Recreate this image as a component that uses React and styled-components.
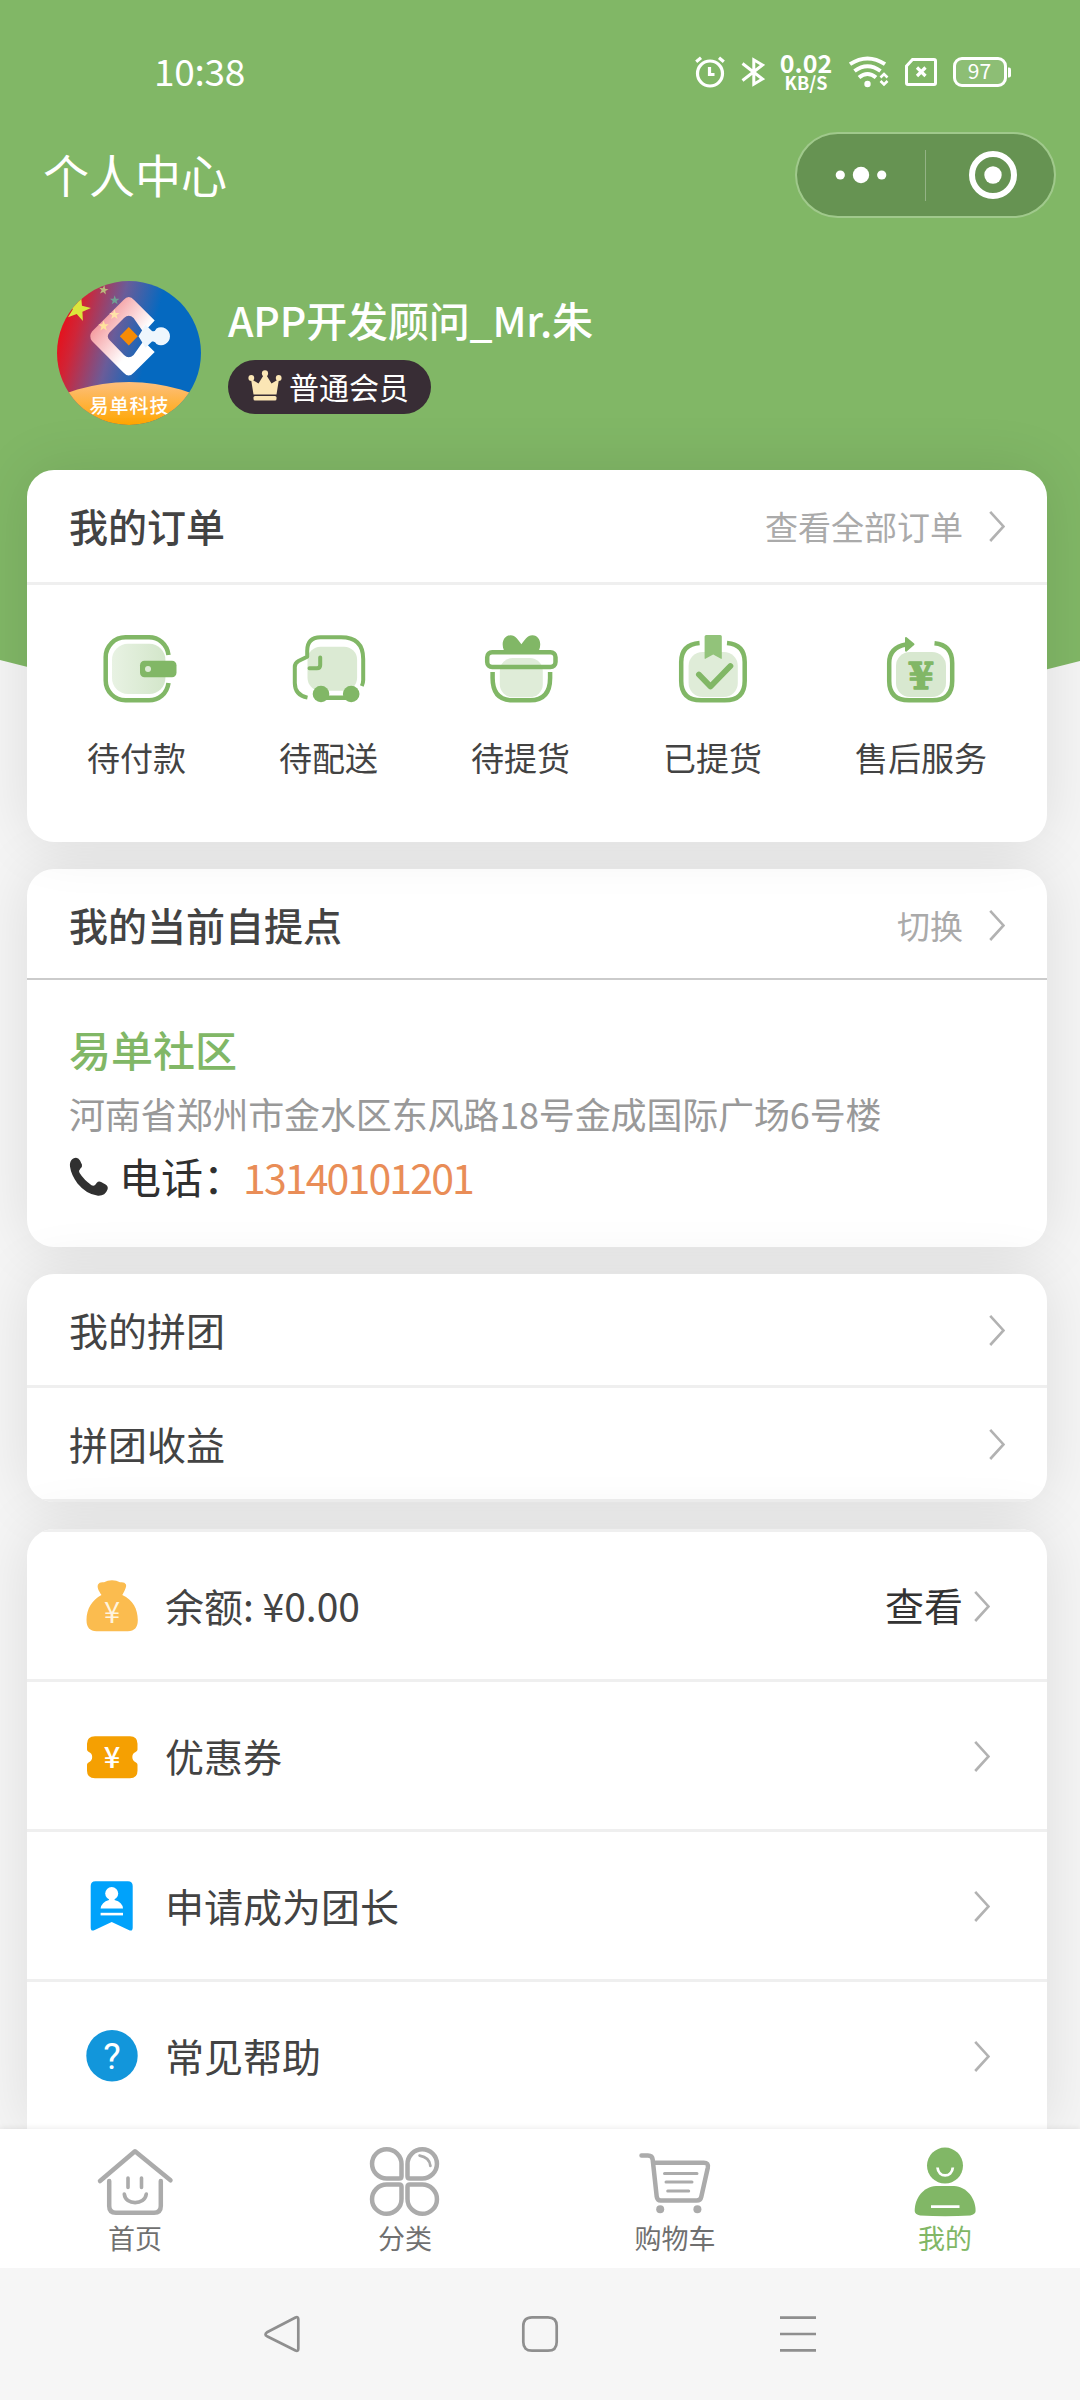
import styled, { createGlobalStyle } from "styled-components";

const GREEN = "#81b766";

const GlobalStyle = createGlobalStyle`
  * {
    box-sizing: border-box;
  }

  body {
    margin: 0;
    background: #f5f5f5;
    font-family: "Noto Sans CJK SC", sans-serif;
    color: #434343;
  }

  svg {
    display: block;
    flex-shrink: 0;
  }
`;

const Screen = styled.div`
  position: relative;
  display: flex;
  flex-direction: column;
  width: 1080px;
  height: 2400px;
  overflow: hidden;
  background: #f5f5f5;
`;

const Backdrop = styled.svg`
  position: absolute;
  top: 0;
  left: 0;
`;

const StatusBar = styled.div`
  position: relative;
  display: flex;
  align-items: center;
  justify-content: space-between;
  height: 120px;
  padding: 24px 69px 0 154px;
  color: #fff;
`;

const Clock = styled.span`
  padding-bottom: 5px;
  font-size: 37px;
  line-height: 44px;
  letter-spacing: -0.3px;
`;

const StatusIcons = styled.div`
  display: flex;
  align-items: center;
  gap: 16px;
`;

const NetSpeed = styled.div`
  display: flex;
  flex-direction: column;
  align-items: center;
  width: 54px;
  margin-left: -2px;
  font-weight: 700;
  font-size: 25px;
  line-height: 20px;
`;

const NetUnit = styled.span`
  font-size: 18px;
  font-weight: 700;
  line-height: 21px;
`;

const TitleBar = styled.header`
  position: relative;
  display: flex;
  align-items: center;
  justify-content: space-between;
  height: 110px;
  padding: 0 24px 0 43px;
`;

const PageTitle = styled.h1`
  margin: 0;
  padding-bottom: 4px;
  font-size: 46px;
  font-weight: 400;
  line-height: 60px;
  color: #fff;
`;

const Capsule = styled.div`
  display: flex;
  align-items: center;
  width: 261px;
  height: 86px;
  border: 2px solid rgba(255, 255, 255, 0.25);
  border-radius: 43px;
  background: #669352;
  background-clip: padding-box;
`;

const CapsuleButton = styled.div`
  display: flex;
  justify-content: center;
  width: 128px;
  padding-left: ${(props) => props.$shift || 0}px;
`;

const CapsuleDivider = styled.div`
  width: 1px;
  height: 51px;
  background: rgba(255, 255, 255, 0.3);
`;

const Profile = styled.section`
  position: relative;
  display: flex;
  align-items: center;
  gap: 27px;
  padding: 51px 57px 45px;
`;

const ProfileInfo = styled.div`
  display: flex;
  flex-direction: column;
  align-items: flex-start;
  gap: 16px;
  padding-top: 2px;
`;

const UserName = styled.div`
  font-size: 41px;
  font-weight: 500;
  line-height: 50px;
  letter-spacing: -0.15px;
  color: #fff;
`;

const MemberBadge = styled.div`
  display: flex;
  align-items: center;
  gap: 7px;
  height: 54px;
  padding: 0 22px 0 20px;
  border-radius: 27px;
  background: #382d35;
  color: #fff;
  font-size: 30px;
  line-height: 40px;
`;

const BadgeText = styled.span`
  padding-bottom: 3px;
`;

const Cards = styled.main`
  position: relative;
  display: flex;
  flex: 1;
  flex-direction: column;
  gap: 27px;
  padding: 0 33px 0 27px;
`;

const Card = styled.section`
  position: relative;
  z-index: ${(props) => props.$layer || 0};
  height: ${(props) => props.$height}px;
  border-radius: ${(props) => (props.$open ? "27px 27px 0 0" : "27px")};
  background: #fff;
  box-shadow: 0 0 60px rgba(0, 0, 0, 0.1);
  overflow: hidden;
`;

const CardHead = styled.div`
  display: flex;
  align-items: center;
  justify-content: space-between;
  height: ${(props) => (props.$thin ? 111 : 115)}px;
  padding: ${(props) => (props.$thin ? "3px 42px 0" : "0 42px")};
  border-bottom: ${(props) =>
    props.$thin ? "2px solid #cbcbcb" : "3px solid #efefef"};
`;

const CardTitle = styled.h2`
  margin: 0;
  padding-bottom: 3px;
  font-size: 39px;
  font-weight: 500;
  line-height: 50px;
`;

const MoreLink = styled.div`
  display: flex;
  align-items: center;
  gap: 26px;
  font-size: 33px;
  line-height: 44px;
  color: #aaa;
`;

const OrderTabs = styled.div`
  display: flex;
  justify-content: space-between;
  padding: 44px 60px 0;
`;

const OrderTab = styled.div`
  display: flex;
  flex-direction: column;
  align-items: center;
  gap: 25px;
  font-size: 33px;
  line-height: 46px;
`;

const PickupBody = styled.div`
  display: flex;
  flex-direction: column;
  padding: 43px 42px 0;
`;

const PickupName = styled.div`
  font-size: 42px;
  font-weight: 500;
  line-height: 52px;
  color: ${GREEN};
`;

const PickupAddress = styled.div`
  margin-top: 14px;
  font-size: 36px;
  line-height: 48px;
  letter-spacing: -0.15px;
  white-space: nowrap;
  color: #999;
`;

const PhoneRow = styled.div`
  display: flex;
  align-items: center;
  margin-top: 12px;
  font-size: 42px;
  line-height: 54px;
  color: #303030;
`;

const PhoneLabel = styled.span`
  width: 124px;
  margin-left: 10px;
  white-space: nowrap;
`;

const PhoneNumber = styled.span`
  font-size: 41px;
  letter-spacing: -1.85px;
  color: #e98d57;
`;

const GroupRow = styled.div`
  display: flex;
  align-items: center;
  justify-content: space-between;
  height: 114px;
  padding: 0 42px;
  border-bottom: 3px solid #efefef;
  font-size: 39px;
  line-height: 50px;
`;

const GroupLabel = styled.span`
  padding-bottom: 2px;
`;

const MenuRow = styled.div`
  display: flex;
  align-items: center;
  gap: 25px;
  height: 150px;
  padding: 0 57px;
  border-top: 3px solid #efefef;
  font-size: 39px;
  line-height: 50px;
`;

const MenuLabel = styled.span`
  flex: 1;
  padding-bottom: 2px;
`;

const MenuAction = styled.div`
  display: flex;
  align-items: center;
  gap: 11px;
  color: #333;
`;

const ActionText = styled.span`
  padding-bottom: 3px;
`;

const TabBar = styled.nav`
  position: relative;
  display: flex;
  height: 139px;
  background: #fff;
  box-shadow: 0 -1px 6px rgba(0, 0, 0, 0.08);
`;

const Tab = styled.div`
  display: flex;
  flex: 1;
  flex-direction: column;
  align-items: center;
  padding-top: 12px;
  font-size: 27px;
  line-height: 34px;
  color: ${(props) => (props.$active ? GREEN : "#707070")};
`;

const SystemBar = styled.div`
  position: relative;
  display: flex;
  align-items: center;
  justify-content: center;
  gap: 218px;
  height: 132px;
  background: #f6f6f6;
`;

const AlarmIcon = () => (
  <svg width="30" height="32" viewBox="0 0 30 32" fill="none" stroke="#fff" strokeWidth="3.2">
    <circle cx="15" cy="17.5" r="12.5" />
    <path d="M14.5 11v7.5h5" />
    <path d="M1.2 5.8 6 1.8M28.8 5.8 24 1.8" />
  </svg>
);

const BluetoothIcon = () => (
  <svg width="24" height="32" viewBox="0 0 24 32" fill="none" stroke="#fff" strokeWidth="3">
    <path d="M1.5 7.5 21.5 23l-8.7 5.2V3.8L21.5 9 1.5 24.5" />
  </svg>
);

const WifiIcon = () => (
  <svg width="40" height="32" viewBox="0 0 40 32" fill="none" stroke="#fff" strokeWidth="4">
    <path d="M1 8.2q17.500-11.500 35 0" />
    <path d="M5.500 15q13-9.500 26 0" />
    <path d="M10 21.500q8.500-7 17 0" />
    <circle cx="18.5" cy="28" r="3.2" fill="#fff" stroke="none" />
    <path d="m31.5 21.500 3.500-3.500 3.500 3.500M31.500 25l3.500 3.500 3.500-3.500" strokeWidth="2.6" />
  </svg>
);

const SimIcon = () => (
  <svg width="32" height="30" viewBox="0 0 32 30" fill="none" stroke="#fff">
    <path d="M7.5 2.5H29q1.5 0 1.5 1.5v22q0 1.5-1.5 1.5H3q-1.5 0-1.5-1.5V9z" strokeWidth="3" />
    <path d="m12 10.5 8.500 8.500M20.500 10.500 12 19" strokeWidth="3.2" />
  </svg>
);

const BatteryIcon = () => (
  <svg width="58" height="32" viewBox="0 0 58 32">
    <rect x="1.5" y="2.5" width="51" height="27" rx="7.5" fill="rgba(255,255,255,.1)" stroke="#fff" strokeWidth="3" />
    <path d="M55 11.5h1q2 0 2 2v6q0 2-2 2h-1z" fill="#fff" />
    <text x="26.5" y="23" fontSize="21" textAnchor="middle" fill="#fff">
      97
    </text>
  </svg>
);

const DotsIcon = () => (
  <svg width="52" height="18" viewBox="0 0 52 18" fill="#fff">
    <circle cx="5.3" cy="9" r="4.6" />
    <circle cx="26" cy="9" r="8.2" />
    <circle cx="46.7" cy="9" r="4.6" />
  </svg>
);

const TargetIcon = () => (
  <svg width="48" height="48" viewBox="0 0 48 48">
    <circle cx="24" cy="24" r="21" fill="none" stroke="#fff" strokeWidth="6" />
    <circle cx="24" cy="24" r="8.7" fill="#fff" />
  </svg>
);

const STAR = "M0-10 2.4-3.1H9.5L3.8 1.2 5.9 8.1 0 4 -5.9 8.1 -3.8 1.2 -9.5-3.1H-2.4z";

const Avatar = () => (
  <svg width="144" height="144" viewBox="0 0 144 144">
    <defs>
      <clipPath id="avatarClip">
        <circle cx="72" cy="72" r="72" />
      </clipPath>
      <linearGradient id="avatarSky" gradientUnits="userSpaceOnUse" x1="2" y1="60" x2="92" y2="84">
        <stop offset="0" stopColor="#e3141f" />
        <stop offset="0.15" stopColor="#cf2538" />
        <stop offset="0.55" stopColor="#6a5c99" />
        <stop offset="0.95" stopColor="#0569c0" />
      </linearGradient>
      <linearGradient id="avatarMark" x1="0.1" y1="0.2" x2="0.75" y2="0.8">
        <stop offset="0" stopColor="#f38c90" />
        <stop offset="0.8" stopColor="#fff" />
      </linearGradient>
      <linearGradient id="avatarSun" gradientUnits="userSpaceOnUse" x1="0" y1="101" x2="0" y2="144">
        <stop offset="0" stopColor="#fdbf7c" />
        <stop offset="1" stopColor="#ffa600" />
      </linearGradient>
    </defs>
    <g clipPath="url(#avatarClip)">
      <rect width="144" height="144" fill="url(#avatarSky)" />
      <path
        d="M66.5 19q5.3-6 10.6 0l20.6 20.5-11.1 12-10-14.500q-4.800-4.500-9.600 0L52.500 51.500q-3.500 3.800 0 7.600L67 74q4.800 4.500 9.600 0L86.500 60l11.200 11L77 91.500q-5.300 6-10.600 0L35 60q-3.500-4.700 0-9.500z"
        fill="url(#avatarMark)"
      />
      <path d="m71.8 46 9 9.300-9 9.300-9-9.300z" fill="#f68b05" />
      <path
        d="m81.5 55.300 7-11.500 6.500 6.200q3 1 4.500-2.500a9 9 0 1 1 0 15.600q-1.500-3.500-4.500-2.500l-6.500 6.200z"
        fill="#eef6fd"
      />
      <g transform="translate(21 28) rotate(14) scale(1.3)" fill="#dbe63c">
        <path d={STAR} />
      </g>
      <g transform="translate(46.6 9) rotate(10) scale(.5)" fill="#b9b97d">
        <path d={STAR} />
      </g>
      <g transform="translate(57.7 19.3) scale(.5)" fill="#6fa193">
        <path d={STAR} />
      </g>
      <g transform="translate(57.4 33.6) scale(.55)" fill="#ffe3a8">
        <path d={STAR} />
      </g>
      <g transform="translate(46.6 45) scale(.55)" fill="#ffe39c">
        <path d={STAR} />
      </g>
      <ellipse cx="72" cy="200" rx="135" ry="99" fill="url(#avatarSun)" />
      <text x="72.5" y="132" fontSize="19" fontWeight="500" letterSpacing="1" textAnchor="middle" fill="#fff">
        易单科技
      </text>
    </g>
  </svg>
);

const CrownIcon = () => (
  <svg width="34" height="34" viewBox="0 0 34 34" fill="#fbe6b5">
    <path d="M3 9 10.5 13.500 16 4.500h2l5.500 9L31 9 28.500 24.500h-23z" />
    <circle cx="3.3" cy="8" r="2.9" />
    <circle cx="17" cy="3.4" r="3.1" />
    <circle cx="30.7" cy="8" r="2.9" />
    <rect x="5.5" y="26" width="23" height="4.6" rx="1.5" />
  </svg>
);

const Chevron = () => (
  <svg width="16" height="32" viewBox="0 0 16 32" fill="none" stroke="#b2b2b2" strokeWidth="2.6">
    <path d="M1.2 1.8 14.5 16.5 1.2 31" />
  </svg>
);

const OrderIcon = ({ children }) => (
  <svg
    width="80"
    height="80"
    viewBox="0 0 80 80"
    fill="none"
    stroke={GREEN}
    strokeWidth="4.5"
    strokeLinecap="round"
    strokeLinejoin="round"
  >
    {children}
  </svg>
);

const WalletIcon = () => (
  <OrderIcon>
    <defs>
      <linearGradient id="walletFill">
        <stop offset="0" stopColor="#e8f2e3" />
        <stop offset="1" stopColor="#d3e6ca" />
      </linearGradient>
    </defs>
    <rect x="15" y="14.7" width="53.4" height="50.3" rx="16" fill="url(#walletFill)" stroke="none" />
    <path
      d="M71.5 26C70 15 61.500 8.300 52 8.300H28.500A19.800 19.800 0 0 0 8.700 28v23.500A19.800 19.800 0 0 0 28.500 71.300h23.500C61.500 71.300 70 65 71.500 54"
      strokeLinecap="butt"
    />
    <rect x="43" y="31.7" width="36.5" height="16.6" rx="4.5" fill={GREEN} stroke="none" />
    <circle cx="51" cy="40" r="3" fill="#dcebd5" stroke="none" />
  </OrderIcon>
);

const TruckIcon = () => (
  <OrderIcon>
    <rect x="18.5" y="17.7" width="49.6" height="44" rx="13" fill="#dbead3" stroke="none" />
    <path
      d="M18.5 68.600C10.500 67 5.800 62 5.800 54V38q0-4 3.700-6l8.700-4.300V22Q18.200 8.300 31.500 8.300H52Q74.200 8.300 74.200 30v21q0 3-1.400 6"
      strokeWidth="4"
      strokeLinecap="butt"
    />
    <path d="M31.2 28.5V36q0 3.300-3.300 3.300H20.500" strokeWidth="4" />
    <path d="M32 68.7h30" />
    <circle cx="32" cy="65" r="8.3" fill={GREEN} stroke="none" />
    <circle cx="62.2" cy="65" r="8.3" fill={GREEN} stroke="none" />
  </OrderIcon>
);

const GiftIcon = () => (
  <OrderIcon>
    <rect x="18.8" y="29" width="43" height="39.3" rx="13" fill="#dfecd8" stroke="none" />
    <path
      d="M23 21.500C20 15 22 6.500 29.500 6.200c5 0 8 5 10.900 9.100 3-4.100 6-9.100 11-9.100 7.500.3 9.500 8.800 6.500 15.300z"
      fill={GREEN}
      stroke="none"
    />
    <rect x="6.2" y="23.2" width="68.3" height="14.8" rx="5" />
    <path d="M11.6 43v6q0 22.300 20 22.300h17.500q20 0 20-22.300v-6" strokeLinecap="butt" />
  </OrderIcon>
);

const PickedIcon = () => (
  <OrderIcon>
    <rect x="15.6" y="23" width="49.2" height="45" rx="14" fill="#dfecd8" stroke="none" />
    <path
      d="M26.6 14Q8.200 15.500 8.200 33v19q0 19.300 20 19.300h23.500q20 0 20-19.300V33Q71.700 15.500 54 14"
      strokeLinecap="butt"
    />
    <path
      d="M33.3 6h14q1.500 0 1.500 1.500V29q0 1.500-1.300.6L40.200 25.500 32.800 29.600q-1.200.9-1.200-.6V7.500Q31.600 6 33.300 6z"
      fill="#92c37a"
      stroke="none"
    />
    <path d="m25.9 45.500 11.600 12 19.900-20.500" strokeWidth="5.8" />
  </OrderIcon>
);

const RefundIcon = () => (
  <OrderIcon>
    <rect x="15" y="23" width="50" height="45" rx="14" fill="#d8e8d0" stroke="none" />
    <path
      d="M25 15.500Q8.200 18.500 8.200 34v18q0 19.300 20 19.300h23.300q19.700 0 19.700-19.300V34Q71.200 16 53.500 14.300"
      strokeLinecap="butt"
    />
    <path d="m25 9 7.500 6.200-7.500 6.500z" fill={GREEN} strokeWidth="2" />
    <text
      x="40"
      y="59.5"
      fontFamily="'DejaVu Serif', serif"
      fontSize="37"
      fontWeight="700"
      textAnchor="middle"
      fill={GREEN}
      strokeWidth="1.4"
    >
      ¥
    </text>
  </OrderIcon>
);

const PhoneIcon = () => (
  <svg width="40" height="42" viewBox="0 -2 40 42" fill="#303030">
    <path d="M1 9.500C.5 4.500 3 1 7 .8q2.500 0 4 2.700l2 4.200q.5 2.200-1.600 3.800-2 2-.8 4.600Q15 23 22.500 28.300q2.200 1.200 3.800-.6l1.500-2q1.800-2 4.300-.8l4.500 2.600q3 2 1.900 5-2.300 6.500-9.500 6.200Q17.500 37.500 8.500 26.500 2 17.500 1 9.500z" />
  </svg>
);

const MoneyBagIcon = () => (
  <svg width="56" height="56" viewBox="0 0 56 56">
    <path
      d="M17.5 17C14 12 13 9 14 6.500q1.500-3 6-2.200 3.500-2 8-2t8 2q4.500-.8 6 2.200 1 2.500-3.700 10.500C49 22 53.800 31 53.800 42q0 11.200-10 11.200H12.500q-10 0-10-11.200C2.500 31 8 22 17.500 17z"
      fill="#fbbc4f"
    />
    <text x="28" y="45" fontSize="29" textAnchor="middle" fill="#fff4de">
      ¥
    </text>
  </svg>
);

const CouponIcon = () => (
  <svg width="56" height="56" viewBox="0 0 56 56">
    <path
      d="M11 8.200h35q7.500 0 7.500 7.500v5.800q0 1.500-1.500 2.200a5.800 5.800 0 0 0 0 10.800q1.500.7 1.500 2.200v6q0 7.500-7.500 7.500H11q-8 0-8-7.500v-6q0-1.500 1.500-2.200a5.800 5.800 0 0 0 0-10.800Q3 23 3 21.500v-5.800q0-7.500 8-7.500z"
      fill="#f5a002"
    />
    <text x="28" y="40" fontSize="29" fontWeight="500" textAnchor="middle" fill="#fff">
      ¥
    </text>
  </svg>
);

const LeaderIcon = () => (
  <svg width="56" height="56" viewBox="0 0 56 56">
    <path
      d="M11.5 3.200h32.400q4.800 0 4.800 4.800v41.500q0 4.500-4 2.500l-17-8-17 8q-4 2-4-2.500V8q0-4.800 4.800-4.800z"
      fill="#00a2fb"
    />
    <circle cx="27.7" cy="15.5" r="6.5" fill="#fff" />
    <path d="M25 19h5.500v3q8 2 8.500 8.600H16.600Q17.500 24 25 22z" fill="#fff" />
    <rect x="16.6" y="34.8" width="22.4" height="2.6" fill="#fff" />
  </svg>
);

const HelpIcon = () => (
  <svg width="56" height="56" viewBox="0 0 56 56">
    <circle cx="28" cy="27.7" r="25.7" fill="#1296db" />
    <text x="28" y="41" fontFamily="Roboto, sans-serif" fontSize="37" fontWeight="400" textAnchor="middle" fill="#fff">
      ?
    </text>
  </svg>
);

const TabIcon = ({ children }) => (
  <svg
    width="80"
    height="80"
    viewBox="0 0 80 80"
    fill="none"
    stroke="#ababab"
    strokeWidth="4.5"
    strokeLinecap="round"
    strokeLinejoin="round"
  >
    {children}
  </svg>
);

const HomeIcon = () => (
  <TabIcon>
    <path d="M5 40 40 10.3l35.500 29" />
    <path d="M14.2 40V65q0 6.700 6.700 6.700h38.200q6.700 0 6.700-6.700V40" />
    <path d="M33 37v9.500M46.500 37v9.500M29.300 53c1 11.500 20.500 11.500 22 0" strokeWidth="3.6" />
  </TabIcon>
);

const PETAL = "M21.7 8.2A14.8 14.8 0 0 1 36.5 23v12.2q0 2.3-2.3 2.3H21.7a14.65 14.65 0 0 1 0-29.3z";

const CategoryIcon = () => (
  <TabIcon>
    <path d={PETAL} />
    <path d={PETAL} transform="matrix(-1 0 0 1 79 0)" />
    <path d={PETAL} transform="matrix(1 0 0 -1 0 81)" />
    <path d={PETAL} transform="matrix(-1 0 0 -1 79 81)" />
    <path d="M54.6 14.6q10 1.8 10.8 10.2" strokeWidth="2.8" />
  </TabIcon>
);

const CartIcon = () => (
  <TabIcon>
    <path d="M6.5 14.5h6.5q4.300 0 4.700 4.300l4 36.700q.5 4 4 4h36q3.800 0 4.600-3.800l6.500-29q1-5-4-5H18.500" />
    <path d="M29.5 32.6h32.500M31 41h26M32.700 49.900h21" strokeWidth="3" />
    <circle cx="25.2" cy="68.3" r="4" fill="#ababab" stroke="none" />
    <circle cx="62.4" cy="68.3" r="4" fill="#ababab" stroke="none" />
  </TabIcon>
);

const MineIcon = () => (
  <TabIcon>
    <circle cx="40" cy="24.6" r="18" fill={GREEN} stroke="none" />
    <path
      d="M31 45h18c13 1 21.600 12 21.600 25q0 3.500-5.500 4.400-25 1.500-50 0Q9.700 73.500 9.700 70C9.700 57 18 46 31 45z"
      fill={GREEN}
      stroke="none"
    />
    <path
      d="M32.5 26.500c.8 10.500 14.500 10.500 15.300 0M26 65.700h28.500"
      stroke="#fff"
      strokeWidth="2.8"
      strokeLinecap="butt"
    />
  </TabIcon>
);

const SystemIcon = ({ path }) => (
  <svg width="40" height="40" viewBox="0 0 40 40" fill="none" stroke="#8f8f8f" strokeWidth="2.7" strokeLinejoin="round">
    <path d={path} />
  </svg>
);

const orders = [
  { label: "待付款", Icon: WalletIcon },
  { label: "待配送", Icon: TruckIcon },
  { label: "待提货", Icon: GiftIcon },
  { label: "已提货", Icon: PickedIcon },
  { label: "售后服务", Icon: RefundIcon },
];

const groups = ["我的拼团", "拼团收益"];

const menu = [
  { label: "余额: ¥0.00", Icon: MoneyBagIcon, action: "查看" },
  { label: "优惠券", Icon: CouponIcon },
  { label: "申请成为团长", Icon: LeaderIcon },
  { label: "常见帮助", Icon: HelpIcon },
];

const tabs = [
  { label: "首页", Icon: HomeIcon },
  { label: "分类", Icon: CategoryIcon },
  { label: "购物车", Icon: CartIcon },
  { label: "我的", Icon: MineIcon, active: true },
];

// back, home and recent keys
const systemKeys = [
  "M33.5 3.5q2.800-1.200 2.800 1.800v29.400q0 3-2.800 1.800L5 22.200q-3-1.700 0-3.900z",
  "M12 3.3h16q8.700 0 8.700 8.700v16q0 8.700-8.700 8.700H12q-8.700 0-8.700-8.700V12q0-8.700 8.700-8.700z",
  "M2 3.6h36M2 20h36M2 36.4h36",
];

const App = () => {
  return (
    <Screen>
      <GlobalStyle />
      <Backdrop width="1080" height="740" viewBox="0 0 1080 740">
        <path d="M0 0h1080v661Q540 801 0 660z" fill={GREEN} />
      </Backdrop>

      <StatusBar>
        <Clock>10:38</Clock>
        <StatusIcons>
          <AlarmIcon />
          <BluetoothIcon />
          <NetSpeed>
            0.02
            <NetUnit>KB/S</NetUnit>
          </NetSpeed>
          <WifiIcon />
          <SimIcon />
          <BatteryIcon />
        </StatusIcons>
      </StatusBar>

      <TitleBar>
        <PageTitle>个人中心</PageTitle>
        <Capsule>
          <CapsuleButton>
            <DotsIcon />
          </CapsuleButton>
          <CapsuleDivider />
          <CapsuleButton $shift={6}>
            <TargetIcon />
          </CapsuleButton>
        </Capsule>
      </TitleBar>

      <Profile>
        <Avatar />
        <ProfileInfo>
          <UserName>APP开发顾问_Mr.朱</UserName>
          <MemberBadge>
            <CrownIcon />
            <BadgeText>普通会员</BadgeText>
          </MemberBadge>
        </ProfileInfo>
      </Profile>

      <Cards>
        <Card $height={372} $layer={1}>
          <CardHead>
            <CardTitle>我的订单</CardTitle>
            <MoreLink>
              查看全部订单
              <Chevron />
            </MoreLink>
          </CardHead>
          <OrderTabs>
            {orders.map(({ label, Icon }) => (
              <OrderTab key={label}>
                <Icon />
                {label}
              </OrderTab>
            ))}
          </OrderTabs>
        </Card>

        <Card $height={378}>
          <CardHead $thin>
            <CardTitle>我的当前自提点</CardTitle>
            <MoreLink>
              切换
              <Chevron />
            </MoreLink>
          </CardHead>
          <PickupBody>
            <PickupName>易单社区</PickupName>
            <PickupAddress>河南省郑州市金水区东风路18号金成国际广场6号楼</PickupAddress>
            <PhoneRow>
              <PhoneIcon />
              <PhoneLabel>电话：</PhoneLabel>
              <PhoneNumber>13140101201</PhoneNumber>
            </PhoneRow>
          </PickupBody>
        </Card>

        <Card $height={228}>
          {groups.map((label) => (
            <GroupRow key={label}>
              <GroupLabel>{label}</GroupLabel>
              <Chevron />
            </GroupRow>
          ))}
        </Card>

        <Card $height={600} $open>
          {menu.map(({ label, Icon, action }) => (
            <MenuRow key={label}>
              <Icon />
              <MenuLabel>{label}</MenuLabel>
              <MenuAction>
                {action && <ActionText>{action}</ActionText>}
                <Chevron />
              </MenuAction>
            </MenuRow>
          ))}
        </Card>
      </Cards>

      <TabBar>
        {tabs.map(({ label, Icon, active }) => (
          <Tab key={label} $active={active}>
            <Icon />
            {label}
          </Tab>
        ))}
      </TabBar>

      <SystemBar>
        {systemKeys.map((path) => (
          <SystemIcon key={path} path={path} />
        ))}
      </SystemBar>
    </Screen>
  );
};

export default App;
